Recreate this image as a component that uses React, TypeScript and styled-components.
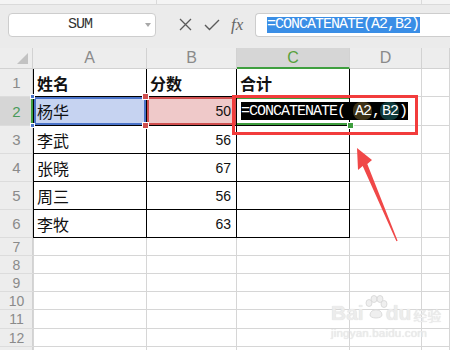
import React from 'react';
import styled, { createGlobalStyle } from 'styled-components';

const CJK = `"Noto Sans CJK SC", "Liberation Sans", sans-serif`;
const MONO = `"Liberation Mono", "Noto Sans CJK SC", monospace`;

const GlobalStyle = createGlobalStyle`
  html, body { margin: 0; padding: 0; background: #fff; overflow: hidden; }
  * { box-sizing: border-box; }
`;

const Root = styled.div`
  position: relative;
  width: 450px;
  height: 350px;
  overflow: hidden;
  background: #ececec;
  font-family: ${CJK};
`;

/* ---------- toolbar ---------- */
const Toolbar = styled.div`
  height: 48px;
  display: flex;
  flex-direction: column;
  background: #ebebeb;
`;

const TopStrip = styled.div`
  height: 5px;
  display: flex;
  background: #f4f4f4;
  border-bottom: 1px solid #dadada;
`;

const StripSeg = styled.div<{ $w: number }>`
  width: ${p => p.$w}px;
  border-right: 1px solid #dadada;
`;

const Bar = styled.div`
  flex: 1;
  display: flex;
  align-items: center;
  padding: 0 0 4px 8px;
`;

const NameBox = styled.div`
  width: 148px;
  height: 24px;
  display: flex;
  align-items: center;
  background: #fff;
  border: 1px solid #cdcdcd;
  border-radius: 4px;
  padding: 0 4px 0 6px;
`;

const NameText = styled.span`
  flex: 1;
  text-align: center;
  font-family: ${MONO};
  font-size: 15px;
  letter-spacing: -1px;
  color: #333;
`;

const Caret = styled.span`
  width: 0;
  height: 0;
  border-left: 3px solid transparent;
  border-right: 3px solid transparent;
  border-top: 4px solid #a8a8a8;
`;

const ToolIcon = styled.svg<{ $ml: number }>`
  margin-left: ${p => p.$ml}px;
  flex: none;
`;

const Fx = styled.span`
  margin-left: 11px;
  width: 16px;
  font-family: "Liberation Serif", serif;
  font-style: italic;
  font-size: 17px;
  color: #666;
  line-height: 1;
`;

const FormulaBox = styled.div`
  flex: 1;
  height: 24px;
  margin-left: 8px;
  display: flex;
  align-items: center;
  background: #fff;
  border: 1px solid #cdcdcd;
  border-right: none;
  border-radius: 4px 0 0 4px;
  padding-left: 11px;
`;

const SelectedText = styled.span`
  background: #3a8ee6;
  color: #fff;
  font-family: ${MONO};
  font-size: 15px;
  letter-spacing: -1px;
  line-height: 16px;
  height: 16px;
  padding-right: 1px;
  white-space: nowrap;
`;

/* ---------- sheet ---------- */
const Sheet = styled.div`
  display: grid;
  grid-template-columns: 33px 114px 90px 113px 72px 28px;
  grid-template-rows: 21px 28px 29px 28px 28px 28px 28px 18px 18px 18px 18px 19px 18px 18px;
  background: #fff;
`;

const Corner = styled.div`
  display: flex;
  align-items: flex-end;
  justify-content: flex-end;
  padding: 0 4px 4px 0;
  background: #ededed;
  border-bottom: 1px solid #d2d2d2;
  border-right: 1px solid #d2d2d2;
`;

const CornerTri = styled.div`
  width: 11px;
  height: 11px;
  background: #c2c2c2;
  clip-path: polygon(100% 0, 100% 100%, 0 100%);
`;

const ColHead = styled.div<{ $active?: boolean }>`
  display: flex;
  align-items: center;
  justify-content: center;
  background: ${p => (p.$active ? '#d6d6d6' : '#ededed')};
  border-right: 1px solid #d2d2d2;
  border-bottom: ${p => (p.$active ? '2px solid #3f9f3f' : '1px solid #d2d2d2')};
  font-family: "Liberation Sans", sans-serif;
  font-size: 16px;
  color: ${p => (p.$active ? '#58a13c' : '#8a8a8a')};
`;

const RowHead = styled.div<{ $active?: boolean; $small?: boolean }>`
  display: flex;
  align-items: center;
  justify-content: center;
  background: ${p => (p.$active ? '#d6d6d6' : '#ededed')};
  border-bottom: 1px solid #dcdcdc;
  box-shadow: ${p => (p.$active ? 'inset -2px 0 0 #3f9f3f' : 'inset -1px 0 0 #d2d2d2')};
  font-family: "Liberation Sans", sans-serif;
  font-size: ${p => (p.$small ? 14 : 15)}px;
  color: ${p => (p.$active ? '#4a9a5a' : '#8a8a8a')};
`;

type Sel = 'blue' | 'red' | 'active' | undefined;

const Cell = styled.div<{ $table?: boolean; $right?: boolean; $bold?: boolean; $first?: boolean; $sel?: Sel }>`
  position: relative;
  display: flex;
  align-items: center;
  justify-content: ${p => (p.$right ? 'flex-end' : 'flex-start')};
  padding: ${p => (p.$right ? '0 5px 0 0' : '0 0 0 3px')};
  white-space: nowrap;
  font-family: ${p => (p.$right ? `"Liberation Sans", sans-serif` : CJK)};
  font-size: ${p => (p.$right ? 14 : 16)}px;
  font-weight: ${p => (p.$bold ? 700 : 400)};
  color: #111;
  border-right: 1px solid ${p => (p.$table ? '#000' : '#d6d6d6')};
  border-bottom: 1px solid ${p => (p.$table ? '#000' : '#d6d6d6')};
  border-left: ${p => (p.$first ? `1px solid ${p.$table ? '#000' : '#d6d6d6'}` : 'none')};
  background: ${p => (p.$sel === 'blue' ? '#c6d3f1' : p.$sel === 'red' ? '#efc9c9' : 'transparent')};
  box-shadow: ${p =>
    p.$sel === 'blue'
      ? 'inset 0 0 0 2px #4a73c9'
      : p.$sel === 'red'
      ? 'inset 0 0 0 2px #cf4f4f'
      : p.$sel === 'active'
      ? 'inset 0 2px 0 #3e9e3e, inset 0 -2px 0 #3e9e3e'
      : 'none'};
  z-index: ${p => (p.$sel === 'active' ? 2 : p.$sel ? 1 : 0)};
`;

const Handle = styled.span<{ $c: string; $s: number; $side: 'left' | 'right'; $edge: 'top' | 'bottom' }>`
  position: absolute;
  width: ${p => p.$s}px;
  height: ${p => p.$s}px;
  background: ${p => p.$c};
  ${p => p.$side}: ${p => -Math.ceil(p.$s / 2) - 1}px;
  ${p => p.$edge}: ${p => -Math.ceil(p.$s / 2)}px;
  outline: 1px solid #fff;
  z-index: 3;
`;

const InCellFormula = styled.span`
  display: inline-flex;
  align-items: center;
  height: 18px;
  margin-left: -1px;
  background: #000;
  color: #fff;
  font-family: ${MONO};
  font-size: 15px;
  letter-spacing: -1px;
  font-weight: 400;
  border-left: 2px solid #fff;
  padding-right: 1px;
`;

const Punct = styled.span<{ $w: number }>`
  display: inline-block;
  width: ${p => p.$w}px;
`;

const RefChip = styled.span<{ $c: string }>`
  display: inline-flex;
  align-items: center;
  height: 18px;
  padding: 0 1px 0 2px;
  border-radius: 8px;
  background: ${p => p.$c};
`;

/* ---------- overlays ---------- */
const Callout = styled.div`
  position: absolute;
  left: 232px;
  top: 95px;
  width: 186px;
  height: 40px;
  border: 3px solid #f23c3c;
  z-index: 5;
`;

const ArrowSvg = styled.svg`
  position: absolute;
  left: 0;
  top: 0;
  pointer-events: none;
  z-index: 5;
`;

const Watermark = styled.div`
  position: absolute;
  left: 331px;
  top: 293px;
  display: flex;
  flex-direction: column;
  color: #ececec;
  text-shadow: 0 0 1px #d6d6d6;
  z-index: 4;
`;

const WmTop = styled.div`
  display: flex;
  align-items: flex-end;
  height: 30px;
`;

const WmLogo = styled.span`
  font-family: "Liberation Sans", sans-serif;
  font-weight: 700;
  font-size: 21px;
  line-height: 21px;
`;

const WmCn = styled.span`
  font-family: ${CJK};
  font-size: 14px;
  line-height: 16px;
  margin-left: 2px;
`;

const WmUrl = styled.div`
  font-family: "Liberation Sans", sans-serif;
  font-size: 11.5px;
  line-height: 14px;
  margin-top: 3px;
  letter-spacing: 0.2px;
`;

const data: [string, string][] = [
  ['姓名', '分数'],
  ['杨华', '50'],
  ['李武', '56'],
  ['张晓', '67'],
  ['周三', '56'],
  ['李牧', '63'],
];

const cols = ['A', 'B', 'C', 'D', ''];

export default function App() {
  const rows = Array.from({ length: 13 }, (_, i) => i + 1);
  return (
    <Root>
      <GlobalStyle />
      <Toolbar>
        <TopStrip>
          <StripSeg $w={157} />
          <StripSeg $w={265} />
        </TopStrip>
        <Bar>
          <NameBox>
            <NameText>SUM</NameText>
            <Caret />
          </NameBox>
          <ToolIcon $ml={23} width="13" height="13" viewBox="0 0 13 13">
            <path d="M1 1 L12 12 M12 1 L1 12" stroke="#5a5a5a" strokeWidth="1.3" fill="none" />
          </ToolIcon>
          <ToolIcon $ml={12} width="16" height="12" viewBox="0 0 16 12">
            <path d="M1 6 L5.5 10.5 L15 1" stroke="#5a5a5a" strokeWidth="1.4" fill="none" />
          </ToolIcon>
          <Fx>fx</Fx>
          <FormulaBox>
            <SelectedText>=CONCATENATE(A2,B2)</SelectedText>
          </FormulaBox>
        </Bar>
      </Toolbar>

      <Sheet>
        <Corner>
          <CornerTri />
        </Corner>
        {cols.map((c, i) => (
          <ColHead key={i} $active={c === 'C'}>
            {c}
          </ColHead>
        ))}
        {rows.map(r => {
          const table = r <= 6;
          const d = table ? data[r - 1] : undefined;
          return (
            <React.Fragment key={r}>
              <RowHead $active={r === 2} $small={r > 6}>
                {r <= 12 ? r : ''}
              </RowHead>
              <Cell $table={table} $first $bold={r === 1} $sel={r === 2 ? 'blue' : undefined}>
                {d?.[0]}
                {r === 2 && (
                  <>
                    <Handle $c="#4a73c9" $s={3} $side="left" $edge="top" />
                    <Handle $c="#4a73c9" $s={3} $side="left" $edge="bottom" />
                  </>
                )}
              </Cell>
              <Cell
                $table={table}
                $right={r !== 1}
                $bold={r === 1}
                $sel={r === 2 ? 'red' : undefined}
                style={r === 1 ? { justifyContent: 'flex-start', padding: '0 0 0 3px' } : undefined}
              >
                {d?.[1]}
                {r === 2 && (
                  <>
                    <Handle $c="#cf4f4f" $s={5} $side="left" $edge="top" />
                    <Handle $c="#cf4f4f" $s={5} $side="left" $edge="bottom" />
                  </>
                )}
              </Cell>
              <Cell $table={table} $bold={r === 1} $sel={r === 2 ? 'active' : undefined}>
                {r === 1 && '合计'}
                {r === 2 && (
                  <>
                    <InCellFormula>
                      =CONCATENATE
                      <Punct $w={16}>(</Punct>
                      <RefChip $c="#3d3217">A2</RefChip>
                      <Punct $w={8}>,</Punct>
                      <RefChip $c="#0f3a3a">B2</RefChip>
                      <Punct $w={8}>)</Punct>
                    </InCellFormula>
                    <Handle $c="#3e9e3e" $s={5} $side="right" $edge="bottom" />
                  </>
                )}
              </Cell>
              <Cell />
              <Cell />
            </React.Fragment>
          );
        })}
      </Sheet>

      <Callout />
      <ArrowSvg width="450" height="350" viewBox="0 0 450 350">
        <polygon
          points="357,148 372,160 367.3,164 397.6,240.8 396.4,241.2 362.7,166 358,170"
          fill="#f04848"
        />
      </ArrowSvg>

      <Watermark>
        <WmTop>
          <WmLogo>Bai</WmLogo>
          <svg width="24" height="28" viewBox="0 0 24 28" style={{ margin: '0 -2px 0 0' }}>
            <g fill="#efefef" stroke="#d6d6d6" strokeWidth="0.8">
              <ellipse cx="5" cy="8" rx="3" ry="3.5" />
              <ellipse cx="10" cy="4" rx="3" ry="3.5" />
              <ellipse cx="16" cy="4" rx="3" ry="3.5" />
              <ellipse cx="20" cy="9" rx="3" ry="3.5" />
              <path d="M6 20 C6 13 18 13 18 20 C18 24 6 24 6 20 Z" />
            </g>
          </svg>
          <WmLogo>du</WmLogo>
          <WmCn>经验</WmCn>
        </WmTop>
        <WmUrl>jingyan.baidu.com</WmUrl>
      </Watermark>
    </Root>
  );
}
